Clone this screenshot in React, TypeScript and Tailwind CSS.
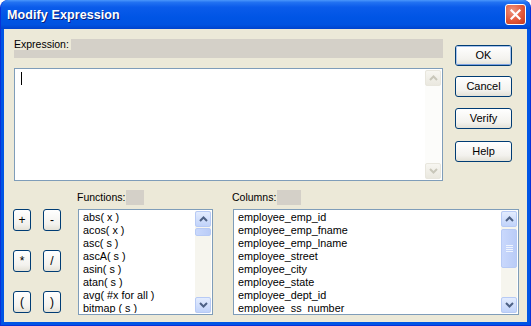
import React from "react";

function Arrow({ dir, disabled }: { dir: "up" | "down"; disabled?: boolean }) {
  const color = disabled ? "#C9C7BA" : "#4D6185";
  return (
    <svg width="9" height="6" viewBox="0 0 9 6" className="block">
      {dir === "up" ? (
        <path d="M1 5 L4.5 1.5 L8 5" fill="none" stroke={color} strokeWidth="2" />
      ) : (
        <path d="M1 1 L4.5 4.5 L8 1" fill="none" stroke={color} strokeWidth="2" />
      )}
    </svg>
  );
}

function ScrollBtn({ dir, disabled }: { dir: "up" | "down"; disabled?: boolean }) {
  return (
    <div
      className={
        disabled
          ? "h-[16px] flex items-center justify-center rounded-[2px] border border-[#E8E6DD] bg-[linear-gradient(to_bottom,#F7F6F1,#EAE8DF)]"
          : "h-[16px] flex items-center justify-center rounded-[2px] border border-[#B7CAF5] bg-[linear-gradient(to_bottom,#E3ECFE,#C1D3FA)]"
      }
    >
      <Arrow dir={dir} disabled={disabled} />
    </div>
  );
}

function XpButton({ label, primary }: { label: string; primary?: boolean }) {
  return (
    <div className="h-[21px] w-[57px] rounded-[3px] border border-[#003C74] bg-[linear-gradient(to_bottom,#FFFFFF,#F3F2EE_70%,#E3E1D7)] flex items-center justify-center text-[11px]">
      <div
        className={
          primary
            ? "w-full h-full rounded-[2px] border border-[#A8C4EE] border-b-[#7DA2E2] flex items-center justify-center"
            : "w-full h-full flex items-center justify-center"
        }
      >
        {label}
      </div>
    </div>
  );
}

function OpButton({ label }: { label: string }) {
  return (
    <div className="h-[22px] w-[18px] rounded-[3px] border border-[#003C74] bg-[linear-gradient(to_bottom,#FFFFFF,#F3F2EE_70%,#E3E1D7)] flex items-center justify-center text-[12px]">
      {label}
    </div>
  );
}

const functions = [
  "abs( x )",
  "acos( x )",
  "asc( s )",
  "ascA( s )",
  "asin( s )",
  "atan( s )",
  "avg( #x for all )",
  "bitmap ( s )",
];

const columns = [
  "employee_emp_id",
  "employee_emp_fname",
  "employee_emp_lname",
  "employee_street",
  "employee_city",
  "employee_state",
  "employee_dept_id",
  "employee_ss_number",
];

function ListBox({ items, width, thumbTop, thumbH }: { items: string[]; width: string; thumbTop: number; thumbH: number }) {
  return (
    <div className={`${width} h-[106px] bg-white border border-[#7F9DB9] flex p-px`}>
      <div className="flex-1 overflow-hidden pl-[3px] text-[10.8px]">
        {items.map((t) => (
          <div key={t} className="h-[13px] leading-[13px] whitespace-nowrap">
            {t}
          </div>
        ))}
      </div>
      <div className="w-[16px] flex flex-col bg-[#F6F5EE]">
        <ScrollBtn dir="up" />
        <div className="flex-1 relative">
          <div
            className="absolute left-0 right-0 rounded-[2px] border border-[#B7CAF5] bg-[linear-gradient(to_right,#C9D8FC,#BACCF7)] flex flex-col items-center justify-center gap-[1px]"
            style={{ top: thumbTop, height: thumbH }}
          >
            {thumbH > 20 && (
              <>
                <div className="w-[7px] h-px bg-[#EEF4FE]" />
                <div className="w-[7px] h-px bg-[#EEF4FE]" />
                <div className="w-[7px] h-px bg-[#EEF4FE]" />
                <div className="w-[7px] h-px bg-[#EEF4FE]" />
              </>
            )}
          </div>
        </div>
        <ScrollBtn dir="down" />
      </div>
    </div>
  );
}

export default function App() {
  return (
    <div className="w-[531px] h-[326px] flex flex-col rounded-t-[8px] overflow-hidden bg-[#0055E5] border border-[#0831D9] border-t-0 font-['Liberation_Sans',Arial,sans-serif] text-[10.5px] text-black">
      {/* Title bar */}
      <div className="h-[29px] -mx-px shrink-0 flex items-center justify-between pl-[7px] pr-[5px] rounded-t-[8px] bg-[linear-gradient(to_bottom,#4A97FB_0%,#2272F2_8%,#0A5BEA_25%,#0055E5_60%,#0053E1_85%,#0043CD_100%)]">
        <div className="text-white font-bold text-[12.5px] [text-shadow:1px_1px_0_#0B1E7A] tracking-[0.1px] pt-[1px]">
          Modify Expression
        </div>
        <div className="w-[21px] h-[21px] rounded-[3px] border border-white bg-[radial-gradient(circle_at_35%_30%,#EE9680,#E2583A_55%,#C2391D)] flex items-center justify-center">
          <svg width="11" height="11" viewBox="0 0 11 11">
            <path d="M1.5 1.5 L9.5 9.5 M9.5 1.5 L1.5 9.5" stroke="white" strokeWidth="2.2" strokeLinecap="square" />
          </svg>
        </div>
      </div>

      {/* Body */}
      <div className="flex-1 mx-[3px] mb-[3px] bg-[#ECE9D8] flex flex-col pl-[10px] pt-[10px]">
        {/* Top row */}
        <div className="flex gap-[12px]">
          <div className="w-[429px] flex flex-col">
            <div className="h-[19px] bg-[#D4D0C8] flex items-start">
              <div className="bg-[#ECE9D8] h-[11px] leading-[11px] pr-[2px]">Expression:</div>
            </div>
            <div className="mt-[10px] h-[113px] bg-white border border-[#7F9DB9] flex p-px">
              <div className="flex-1 pl-[5px] pt-[2px]">
                <div className="w-px h-[13px] bg-black" />
              </div>
              <div className="w-[16px] flex flex-col bg-[#FCFCFA]">
                <ScrollBtn dir="up" disabled />
                <div className="flex-1" />
                <ScrollBtn dir="down" disabled />
              </div>
            </div>
          </div>
          <div className="flex flex-col pt-[6px]">
            <XpButton label="OK" primary />
            <div className="mt-[10px]">
              <XpButton label="Cancel" />
            </div>
            <div className="mt-[11px]">
              <XpButton label="Verify" />
            </div>
            <div className="mt-[12px]">
              <XpButton label="Help" />
            </div>
          </div>
        </div>

        {/* Bottom row */}
        <div className="flex mt-[9px] -ml-px">
          <div className="flex flex-col pt-[19px] w-[48px]">
            <div className="flex gap-[12px]">
              <OpButton label="+" />
              <OpButton label="-" />
            </div>
            <div className="flex gap-[12px] mt-[19px]">
              <OpButton label="*" />
              <OpButton label="/" />
            </div>
            <div className="flex gap-[12px] mt-[19px]">
              <OpButton label="(" />
              <OpButton label=")" />
            </div>
          </div>
          <div className="ml-[16px] flex flex-col">
            <div className="flex h-[15px]">
              <div className="leading-[15px] pr-[1px]">Functions:</div>
              <div className="w-[18px] bg-[#D4D0C8]" />
            </div>
            <div className="mt-[4px] ml-px">
              <ListBox items={functions} width="w-[135px]" thumbTop={1} thumbH={8} />
            </div>
          </div>
          <div className="ml-[19px] flex flex-col">
            <div className="flex h-[15px]">
              <div className="leading-[15px] pr-[1px]">Columns:</div>
              <div className="w-[24px] bg-[#D4D0C8]" />
            </div>
            <div className="mt-[4px] ml-px">
              <ListBox items={columns} width="w-[286px]" thumbTop={2} thumbH={39} />
            </div>
          </div>
        </div>
      </div>
    </div>
  );
}
